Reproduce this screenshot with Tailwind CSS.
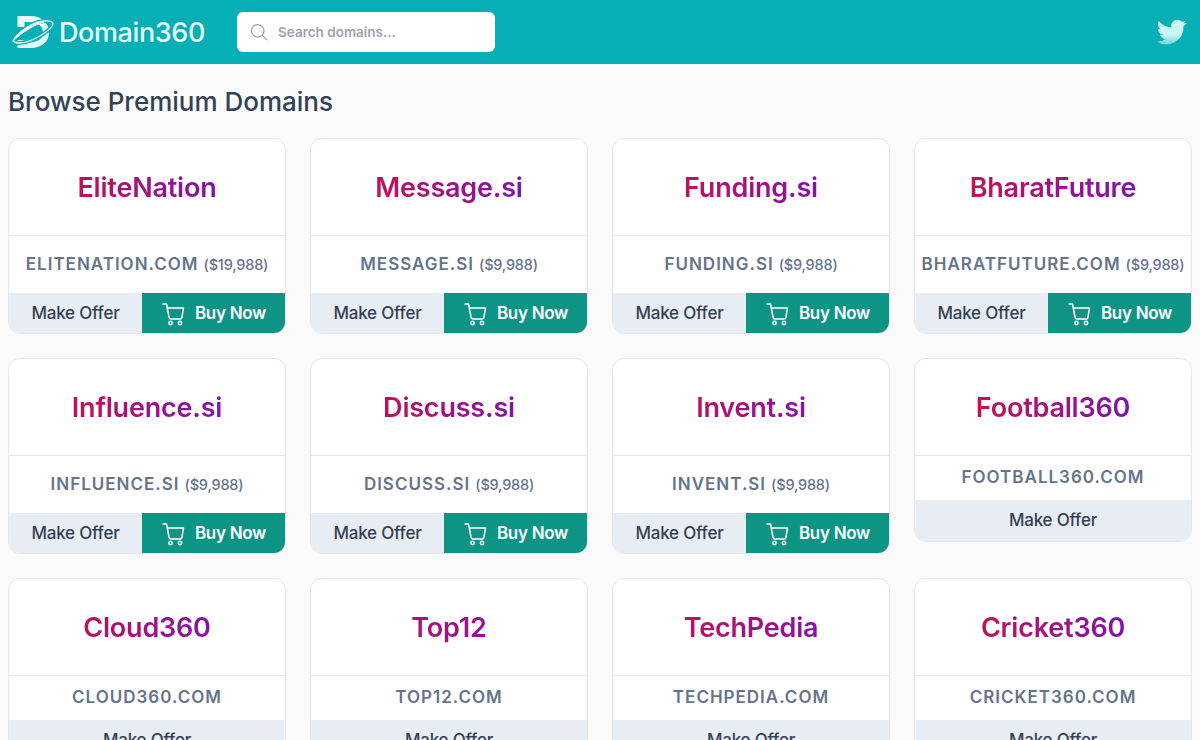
<!DOCTYPE html>
<html lang="en">
  <head>
    <meta charset="UTF-8" />
    <title>Domain360</title>
    <script src="https://cdn.jsdelivr.net/npm/@tailwindcss/browser@4"></script>
  </head>
  <body class="h-[740px] overflow-hidden bg-[#fafafa] font-['Inter',sans-serif] text-[#334155]">
    <!-- Header -->
    <header class="flex h-16 items-center bg-[#06aeb5] pr-3 pl-3">
      <a href="#" class="flex w-[225px] items-center gap-[5px] text-white">
        <svg viewBox="0 0 42 36" class="h-[36px] w-[42px]" fill="none">
          <path d="M6 5h13c9 0 15 6 15 13.500S28 31 19 31H9" stroke="#e8fdfc" stroke-width="6" />
          <path d="M9 2v11M9 26v8" stroke="#e8fdfc" stroke-width="7" />
          <path d="M1 27C5 19 20 8 32 7c6-.5 9 .5 9 3 0 3-5 7-13 12-7 4-15 7-21 7-3 0-5-1-6-2z" stroke="#06aeb5" stroke-width="4" />
          <path d="M1 27C5 19 20 8 32 7c6-.5 9 .5 9 3 0 3-5 7-13 12-7 4-15 7-21 7-3 0-5-1-6-2z" stroke="#e8fdfc" stroke-width="1.300" />
          <path d="M1 27C6 18 20 9 32 8c-8 2-22 10-31 19z" fill="#e8fdfc" stroke="#e8fdfc" />
        </svg>
        <span class="text-[27px] leading-none font-medium tracking-[-0.4px] text-[#e8fdfc]">Domain360</span>
      </a>
      <div class="flex h-[40px] w-[258px] items-center gap-[9px] rounded-md bg-white px-3">
        <svg viewBox="0 0 24 24" class="h-5 w-5 text-gray-400" fill="none" stroke="currentColor" stroke-width="1.500">
          <circle cx="10.500" cy="10.500" r="7.500" />
          <path d="M16 16l5.500 5.500" stroke-linecap="round" />
        </svg>
        <span class="text-[13.5px] font-semibold text-[#9ca3af]">Search domains...</span>
      </div>
      <svg viewBox="0 0 24 24" class="ml-auto h-8 w-8">
        <defs>
          <linearGradient id="bird" x1="0" y1="0" x2="0" y2="1">
            <stop offset="0.6" stop-color="#c9f6f4" />
            <stop offset="1" stop-color="#6fd6d8" />
          </linearGradient>
        </defs>
        <path fill="url(#bird)" d="M23 5c-.8.4-1.700.6-2.600.7.900-.6 1.600-1.400 2-2.400-.9.5-1.900.9-2.900 1.100A4.600 4.600 0 0 0 11.600 8.600C7.800 8.400 4.400 6.600 2.100 3.800c-1.200 2.100-.6 4.800 1.400 6.100-.7 0-1.400-.2-2.100-.6 0 2.200 1.600 4.100 3.700 4.600-.7.2-1.400.2-2.100.1.6 1.900 2.300 3.200 4.300 3.200A9.300 9.300 0 0 1 .5 19.100 13 13 0 0 0 20.600 7.600c.9-.6 1.700-1.500 2.400-2.600z" />
      </svg>
    </header>

    <main class="px-2">
      <h1 class="pt-[22px] pb-[20px] text-[26px] leading-[32px] font-medium text-[#334155]">Browse Premium Domains</h1>
      <div id="grid" class="grid grid-cols-4 items-start gap-6"></div>
    </main>

    <script>
      const buyDomains = [
        ['EliteNation', 'ELITENATION.COM', '$19,988'],
        ['Message.si', 'MESSAGE.SI', '$9,988'],
        ['Funding.si', 'FUNDING.SI', '$9,988'],
        ['BharatFuture', 'BHARATFUTURE.COM', '$9,988'],
        ['Influence.si', 'INFLUENCE.SI', '$9,988'],
        ['Discuss.si', 'DISCUSS.SI', '$9,988'],
        ['Invent.si', 'INVENT.SI', '$9,988'],
        ['Football360', 'FOOTBALL360.COM'],
        ['Cloud360', 'CLOUD360.COM'],
        ['Top12', 'TOP12.COM'],
        ['TechPedia', 'TECHPEDIA.COM'],
        ['Cricket360', 'CRICKET360.COM'],
      ];

      const cartIcon = `<svg viewBox="0 0 24 24" class="h-[24px] w-[24px]" fill="none" stroke="currentColor" stroke-width="1.500" stroke-linecap="round" stroke-linejoin="round"><path d="M2 2h3.500l2.600 13.500a2 2 0 0 0 2 1.500h8.800a2 2 0 0 0 2-1.500L22.500 6H6.300" /><circle cx="9.500" cy="21" r="1.700" /><circle cx="19" cy="21" r="1.700" /></svg>`;

      document.getElementById('grid').innerHTML = buyDomains.map(([name, domain, price]) => `
        <article class="overflow-hidden rounded-xl border border-[#e5e7eb] bg-white">
          <div class="flex h-[97px] items-center justify-center border-b border-[#e5e7eb] pt-[2px]">
            <h2 class="w-full bg-linear-to-r/srgb from-[#e0102c] to-[#6414d8] bg-clip-text text-center text-[27px] leading-[34px] font-semibold tracking-[-0.2px] text-transparent">${name}</h2>
          </div>
          ${price ? `
          <p class="flex h-[57px] items-center justify-center gap-[5px] text-[17px] font-semibold tracking-[1px] whitespace-nowrap text-[#64748b]">${domain} <span class="text-[14.5px] font-medium tracking-[-0.2px]">(${price})</span></p>
          <div class="flex h-10 text-[17px]">
            <button class="w-[133px] bg-[#e8edf4] pt-px font-medium tracking-[-0.2px] text-[#334155]">Make Offer</button>
            <button class="flex flex-1 items-center justify-center gap-2.5 bg-[#0d9485] pt-px font-semibold tracking-[-0.3px] text-white">${cartIcon}Buy Now</button>
          </div>` : `
          <p class="flex h-[44px] items-center justify-center text-[17px] font-semibold tracking-[1px] text-[#64748b]">${domain}</p>
          <button class="h-[41px] w-full bg-[#e8edf4] pt-px text-[17px] font-medium tracking-[-0.2px] text-[#334155]">Make Offer</button>`}
        </article>`).join('');
    </script>
  </body>
</html>
